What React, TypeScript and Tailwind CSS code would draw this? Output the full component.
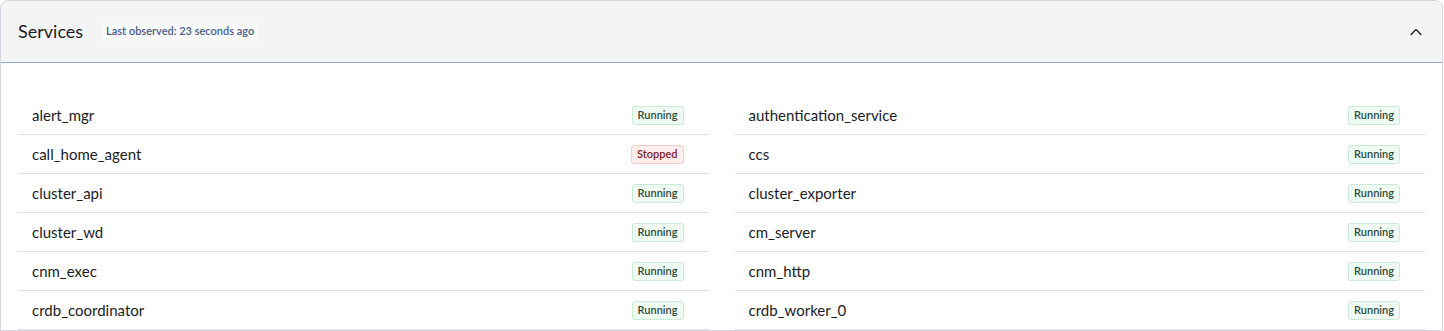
import { ChevronUp } from 'lucide-react';

type Status = 'Running' | 'Stopped';

const services: { name: string; status: Status }[] = [
  { name: 'alert_mgr', status: 'Running' },
  { name: 'authentication_service', status: 'Running' },
  { name: 'call_home_agent', status: 'Stopped' },
  { name: 'ccs', status: 'Running' },
  { name: 'cluster_api', status: 'Running' },
  { name: 'cluster_exporter', status: 'Running' },
  { name: 'cluster_wd', status: 'Running' },
  { name: 'cm_server', status: 'Running' },
  { name: 'cnm_exec', status: 'Running' },
  { name: 'cnm_http', status: 'Running' },
  { name: 'crdb_coordinator', status: 'Running' },
  { name: 'crdb_worker_0', status: 'Running' },
];

function StatusBadge({ status }: { status: Status }) {
  const running = status === 'Running';
  return (
    <span
      className={
        running
          ? 'inline-flex h-[19px] items-center rounded-[3px] border border-[#c9ebd6] bg-[#eefaf2] px-[5px] text-[11px] font-semibold text-[#2e4a3b]'
          : 'inline-flex h-[19px] items-center rounded-[3px] border border-[#f4cccc] bg-[#fdeded] px-[5px] text-[11px] font-semibold text-[#7b2323]'
      }
    >
      {status}
    </span>
  );
}

export default function App() {
  return (
    <div className="h-[331px] overflow-hidden bg-white font-['Lato','Open_Sans',sans-serif]">
      <section className="mr-[1px] rounded-t-[8px] border border-[#d3d6dc]">
        <header className="flex h-[62px] items-center gap-[18px] rounded-t-[8px] border-b border-[#9aabcc] bg-[#f3f4f6] pl-[17px] pr-[16px]">
          <h2 className="text-[18px] text-[#1b1c1f]">Services</h2>
          <span className="inline-flex h-[18px] items-center rounded-[3px] bg-[#f9fafb] px-[5px] text-[11px] font-semibold text-[#4a5d85]">
            Last observed: 23 seconds ago
          </span>
          <button className="ml-auto text-[#1f2023]" title="Collapse">
            <ChevronUp className="h-[20px] w-[20px]" strokeWidth={1.5} />
          </button>
        </header>

        <div className="grid grid-cols-2 gap-x-[26px] px-[17px] pt-[33px]">
          {services.map((s) => (
            <div
              key={s.name}
              className="flex h-[39px] items-center justify-between border-b border-[#dfe1e5] pl-[14px] pr-[25px]"
            >
              <span className="text-[15px] text-[#1b1c1f]">{s.name}</span>
              <StatusBadge status={s.status} />
            </div>
          ))}
        </div>
      </section>
    </div>
  );
}
